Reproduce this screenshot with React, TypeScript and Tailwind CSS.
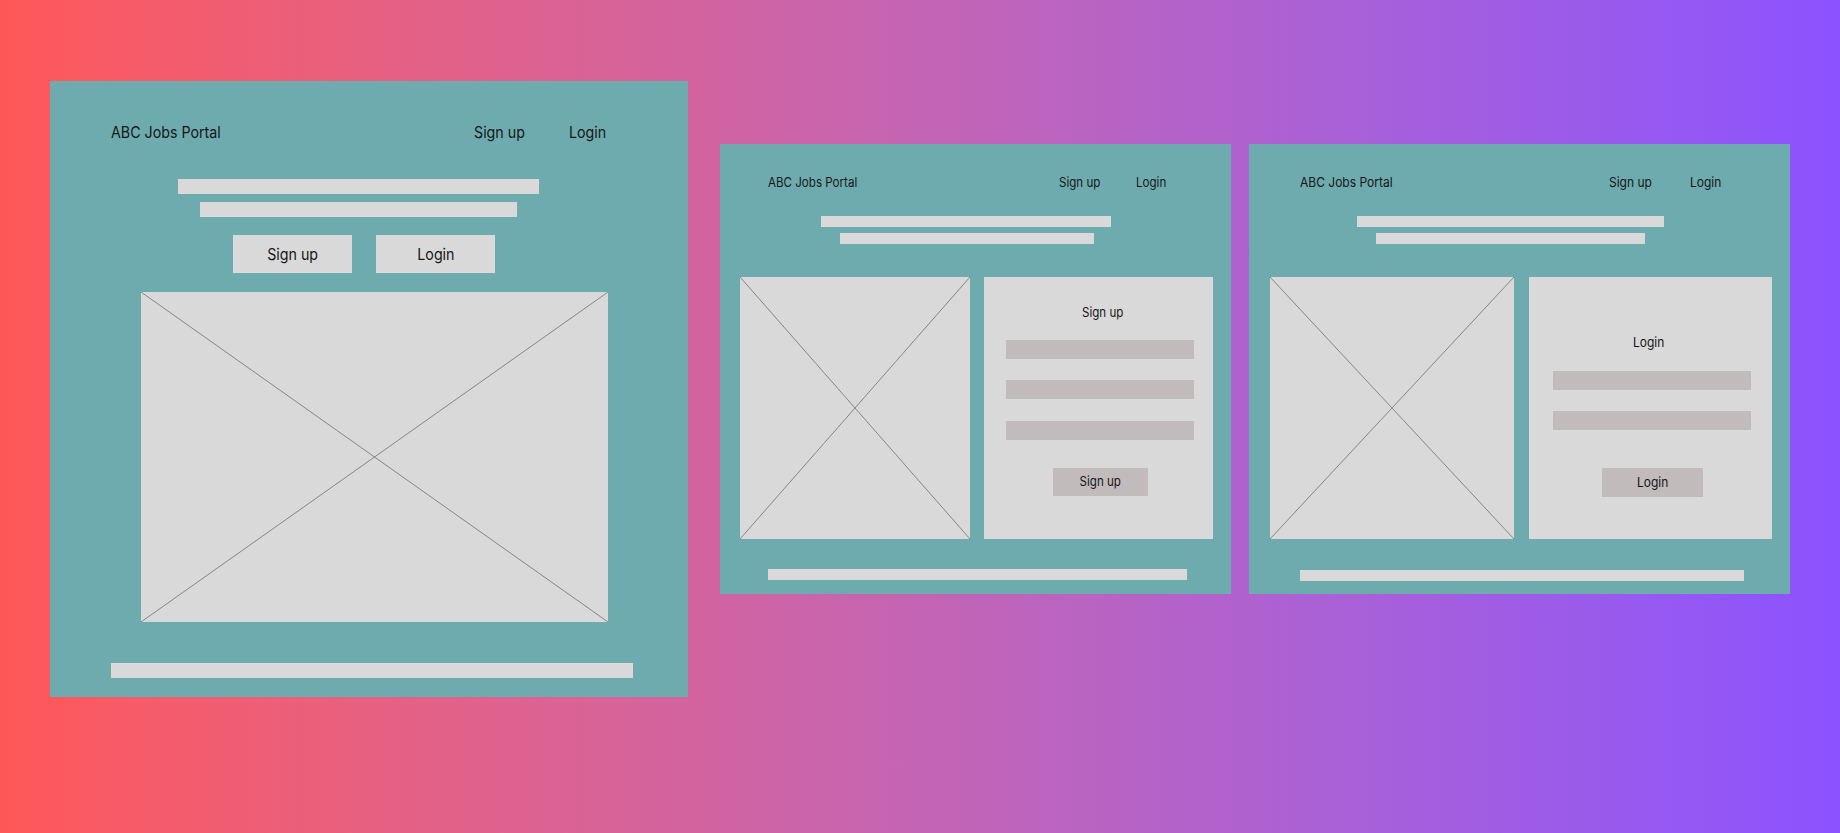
const font = { fontFamily: "Inter, 'Noto Sans', sans-serif" };

const ImageX = ({ className }: { className: string }) => (
  <div className={`bg-[#d9d9d9] ${className}`}>
    <svg className="h-full w-full" viewBox="0 0 100 100" preserveAspectRatio="none">
      <line x1="0" y1="0" x2="100" y2="100" stroke="#858585" strokeWidth="1" vectorEffect="non-scaling-stroke" />
      <line x1="100" y1="0" x2="0" y2="100" stroke="#858585" strokeWidth="1" vectorEffect="non-scaling-stroke" />
    </svg>
  </div>
);

// the mockup text is a little narrower than Inter, squeeze it
const Txt = ({ children, center }: { children: string; center?: boolean }) => (
  <span className={`inline-block whitespace-nowrap scale-x-[0.89] ${center ? "origin-center" : "origin-left"}`}>
    {children}
  </span>
);

const LargeFrame = () => (
  <div className="mt-[81px] flex h-[616px] w-[638px] shrink-0 flex-col bg-[#6eabaf]">
    <header className="flex items-center pl-[61px] pt-[39px] text-[16px] leading-6">
      <div className="w-[363px]"><Txt>ABC Jobs Portal</Txt></div>
      <div className="w-[95px]"><Txt>Sign up</Txt></div>
      <div><Txt>Login</Txt></div>
    </header>
    <div className="ml-[128px] mt-[35px] h-[15px] w-[361px] bg-[#d9d9d9]" />
    <div className="ml-[150px] mt-[8px] h-[15px] w-[317px] bg-[#d9d9d9]" />
    <div className="ml-[183px] mt-[18px] flex gap-[24px]">
      <button className="flex h-[38px] w-[119px] items-center justify-center bg-[#d9d9d9] text-[16px]">
        <Txt center>Sign up</Txt>
      </button>
      <button className="flex h-[38px] w-[119px] items-center justify-center bg-[#d9d9d9] text-[16px]">
        <Txt center>Login</Txt>
      </button>
    </div>
    <ImageX className="ml-[91px] mt-[19px] h-[330px] w-[467px]" />
    <div className="ml-[61px] mt-[41px] h-[15px] w-[522px] bg-[#d9d9d9]" />
  </div>
);

const SignupFrame = () => (
  <div className="ml-[32px] mt-[144px] flex h-[450px] w-[511px] shrink-0 flex-col bg-[#6eabaf] text-[13px]">
    <header className="flex items-center pl-[48px] pt-[29px] leading-[18px]">
      <div className="w-[291px]"><Txt>ABC Jobs Portal</Txt></div>
      <div className="w-[77px]"><Txt>Sign up</Txt></div>
      <div><Txt>Login</Txt></div>
    </header>
    <div className="ml-[101px] mt-[25px] h-[11px] w-[290px] bg-[#d9d9d9]" />
    <div className="ml-[120px] mt-[6px] h-[11px] w-[254px] bg-[#d9d9d9]" />
    <div className="mt-[33px] flex gap-[14px] pl-[20px]">
      <ImageX className="h-[262px] w-[230px]" />
      <div className="flex h-[262px] w-[229px] flex-col bg-[#d9d9d9]">
        <p className="ml-[98px] pt-[26px] leading-[18px]"><Txt>Sign up</Txt></p>
        <div className="ml-[22px] mt-[19px] h-[19px] w-[188px] bg-[#c1bbbb]" />
        <div className="ml-[22px] mt-[21px] h-[19px] w-[188px] bg-[#c1bbbb]" />
        <div className="ml-[22px] mt-[22px] h-[19px] w-[188px] bg-[#c1bbbb]" />
        <button className="ml-[69px] mt-[28px] flex h-[28px] w-[95px] items-center justify-center bg-[#c1bbbb]">
          <Txt center>Sign up</Txt>
        </button>
      </div>
    </div>
    <div className="ml-[48px] mt-[30px] h-[11px] w-[419px] bg-[#d9d9d9]" />
  </div>
);

const LoginFrame = () => (
  <div className="ml-[18px] mt-[144px] flex h-[450px] w-[541px] shrink-0 flex-col bg-[#6eabaf] text-[13.5px]">
    <header className="flex items-center pl-[51px] pt-[29px] leading-[18px]">
      <div className="w-[309px]"><Txt>ABC Jobs Portal</Txt></div>
      <div className="w-[81px]"><Txt>Sign up</Txt></div>
      <div><Txt>Login</Txt></div>
    </header>
    <div className="ml-[108px] mt-[25px] h-[11px] w-[307px] bg-[#d9d9d9]" />
    <div className="ml-[127px] mt-[6px] h-[11px] w-[269px] bg-[#d9d9d9]" />
    <div className="mt-[33px] flex gap-[15px] pl-[21px]">
      <ImageX className="h-[262px] w-[244px]" />
      <div className="flex h-[262px] w-[243px] flex-col bg-[#d9d9d9]">
        <p className="ml-[104px] pt-[56px] leading-[18px]"><Txt>Login</Txt></p>
        <div className="ml-[24px] mt-[20px] h-[19px] w-[198px] bg-[#c1bbbb]" />
        <div className="ml-[24px] mt-[21px] h-[19px] w-[198px] bg-[#c1bbbb]" />
        <button className="ml-[73px] mt-[38px] flex h-[29px] w-[101px] items-center justify-center bg-[#c1bbbb]">
          <Txt center>Login</Txt>
        </button>
      </div>
    </div>
    <div className="ml-[51px] mt-[31px] h-[11px] w-[444px] bg-[#d9d9d9]" />
  </div>
);

export default function App() {
  return (
    <div
      className="flex h-[833px] w-full items-start overflow-hidden bg-linear-to-r from-[#ff5757] to-[#8c52ff] pl-[50px] text-[#161616]"
      style={font}
    >
      <LargeFrame />
      <SignupFrame />
      <LoginFrame />
    </div>
  );
}
